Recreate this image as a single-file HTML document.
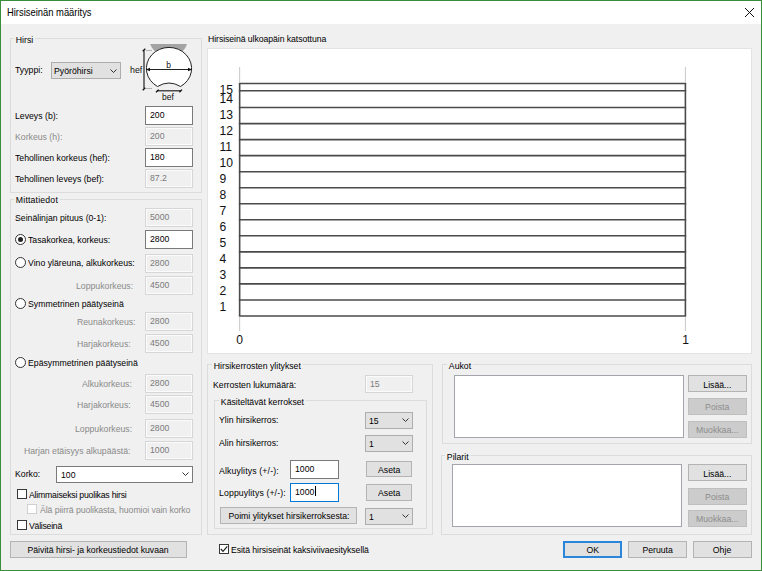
<!DOCTYPE html>
<html><head><meta charset="utf-8">
<style>
*{box-sizing:border-box}
html,body{margin:0;padding:0}
body{width:762px;height:571px;position:relative;overflow:hidden;background:#3a8d3b;font-family:"Liberation Sans",sans-serif;font-size:8.7px;color:#000;-webkit-text-stroke:0px}
.win{position:absolute;left:1px;top:1px;width:760px;height:569px;background:#f0f0f0}
.title{position:absolute;left:0;top:0;width:760px;height:23px;background:#fff}
.t{position:absolute;white-space:nowrap;line-height:10px}
.d{color:#8a8a8a}
.g{position:absolute;border:1px solid #dcdcdc}
.gl{position:absolute;white-space:nowrap;line-height:10px;background:#f0f0f0;padding:0 2px}
.tb{position:absolute;background:#fff;border:1px solid #7a7a7a;line-height:10px;padding:0 0 0 4px;white-space:nowrap}
.tbd{position:absolute;background:#f0f0f0;border:1px solid #d6d6d6;box-shadow:inset 0 0 0 1px #fbfbfb;color:#7a7a7a;line-height:10px;padding:0 0 0 4px;white-space:nowrap}
.cb{position:absolute;background:#e1e1e1;border:1px solid #adadad;line-height:10px;white-space:nowrap}
.btn{position:absolute;background:#e1e1e1;border:1px solid #b4b4b4;text-align:center;line-height:10px;white-space:nowrap}
.btnd{position:absolute;background:#cccccc;border:1px solid #bfbfbf;color:#8d8d8d;text-align:center;line-height:10px;white-space:nowrap}
.lb{position:absolute;background:#fff;border:1px solid #a2a5ab}
.t,.gl{font-size:9.5px;transform:scaleX(0.916);transform-origin:0 0}
.s{display:inline-block;line-height:10px;font-size:9.5px;transform:scaleX(0.916);transform-origin:0 0}
.btn .s,.btnd .s{transform-origin:50% 0}
.chev{position:absolute;width:7px;height:4px}
.rad{position:absolute;width:11px;height:11px;border:1px solid #333;border-radius:50%;background:#fff}
.chk{position:absolute;width:10px;height:10px;border:1px solid #383838;background:#fff}
</style></head><body>
<div class="win">
  <div class="title"></div>
</div>
<div class="t" style="left:7px;top:6px;font-size:10.8px;line-height:12px;transform:scaleX(0.87);transform-origin:0 0">Hirsiseinän määritys</div>
<svg style="position:absolute;left:744px;top:7px" width="11" height="11" viewBox="0 0 11 11"><path d="M1 1L10 10M10 1L1 10" stroke="#111" stroke-width="1"/></svg>

<!-- Hirsi group -->
<div class="g" style="left:10px;top:38px;width:192px;height:155px"></div>
<div class="gl" style="left:14px;top:35px">Hirsi</div>
<div class="t" style="left:15px;top:65px">Tyyppi:</div>
<div class="cb" style="left:51px;top:62px;width:70px;height:17px;padding:2.5px 0 0 2px"><span class="s">Pyöröhirsi</span></div>
<svg class="chev" style="left:110px;top:68.5px" viewBox="0 0 7 4"><path d="M0.5 0.5L3.5 3.5L6.5 0.5" fill="none" stroke="#333" stroke-width="1"/></svg>

<svg style="position:absolute;left:0;top:0;-webkit-text-stroke:0" width="210" height="110" font-family="Liberation Sans" fill="#111">
<path d="M150 44H187Q186 48 182 52A22.6 21 0 0 0 155.5 52Q151.5 48 150 44Z" fill="#a4a4a4"/>
<path d="M157.5 86.5A22.6 21 0 1 1 180.5 86.5Q169 79.5 157.5 86.5Z" fill="#fff" stroke="#222" stroke-width="1"/>
<line x1="147" y1="69.5" x2="191" y2="69.5" stroke="#222" stroke-width="1.2"/>
<path d="M146 69.5L150 67.7V71.3Z M192 69.5L188 67.7V71.3Z" fill="#111"/>
<line x1="144" y1="50.5" x2="144" y2="88.5" stroke="#222" stroke-width="1.2"/>
<path d="M142.7 51.3L145.3 48.7 M142.7 90.3L145.3 87.7" stroke="#111" stroke-width="1.3"/>
<line x1="146" y1="50.5" x2="152" y2="50.5" stroke="#b0b0b0" stroke-width="1"/>
<line x1="146" y1="88.5" x2="152" y2="88.5" stroke="#b0b0b0" stroke-width="1"/>
<line x1="157" y1="90.8" x2="181" y2="90.8" stroke="#222" stroke-width="1.2"/>
<path d="M156 92.2L158.6 89.6 M179.4 92.2L182 89.6" stroke="#111" stroke-width="1.3"/>
<text x="168.5" y="68" font-size="8.5" text-anchor="middle">b</text>
<text x="130" y="73" font-size="8.8">hef</text>
<text x="162" y="99.6" font-size="8.5">bef</text>
</svg>
<div class="t" style="left:15px;top:111px">Leveys (b):</div>
<div class="tb" style="left:145px;top:106px;width:48px;height:19px;padding-top:2.5px"><span class="s">200</span></div>
<div class="t d" style="left:15px;top:132px">Korkeus (h):</div>
<div class="tbd" style="left:145px;top:127px;width:48px;height:19px;padding-top:2.5px"><span class="s">200</span></div>
<div class="t" style="left:15px;top:153px">Tehollinen korkeus (hef):</div>
<div class="tb" style="left:145px;top:148px;width:48px;height:19px;padding-top:2.5px"><span class="s">180</span></div>
<div class="t" style="left:15px;top:174px">Tehollinen leveys (bef):</div>
<div class="tbd" style="left:145px;top:169px;width:48px;height:19px;padding-top:2.5px"><span class="s">87.2</span></div>

<!-- Mittatiedot group -->
<div class="g" style="left:10px;top:199px;width:192px;height:336px"></div>
<div class="gl" style="left:14px;top:195px;letter-spacing:0.2px">Mittatiedot</div>
<div class="t" style="left:15px;top:213px">Seinälinjan pituus (0-1):</div>
<div class="tbd" style="left:145px;top:208px;width:48px;height:19px;padding-top:2.5px"><span class="s">5000</span></div>
<div class="rad" style="left:15px;top:234px"></div>
<div style="position:absolute;left:18px;top:237px;width:5px;height:5px;border-radius:50%;background:#222"></div>
<div class="t" style="left:27.5px;top:235px">Tasakorkea, korkeus:</div>
<div class="tb" style="left:145px;top:230px;width:48px;height:19px;padding-top:2.5px"><span class="s">2800</span></div>
<div class="rad" style="left:15px;top:257px"></div>
<div class="t" style="left:28px;top:258px">Vino yläreuna, alkukorkeus:</div>
<div class="tbd" style="left:145px;top:254px;width:48px;height:19px;padding-top:2.5px"><span class="s">2800</span></div>
<div class="t d" style="left:76px;top:281px">Loppukorkeus:</div>
<div class="tbd" style="left:145px;top:276px;width:48px;height:19px;padding-top:2.5px"><span class="s">4500</span></div>
<div class="rad" style="left:15px;top:298px"></div>
<div class="t" style="left:28px;top:299px">Symmetrinen päätyseinä</div>
<div class="t d" style="left:77px;top:317px">Reunakorkeus:</div>
<div class="tbd" style="left:145px;top:312px;width:48px;height:19px;padding-top:2.5px"><span class="s">2800</span></div>
<div class="t d" style="left:77px;top:339px">Harjakorkeus:</div>
<div class="tbd" style="left:145px;top:334px;width:48px;height:19px;padding-top:2.5px"><span class="s">4500</span></div>
<div class="rad" style="left:15px;top:357px"></div>
<div class="t" style="left:28px;top:358px">Epäsymmetrinen päätyseinä</div>
<div class="t d" style="left:82px;top:379px">Alkukorkeus:</div>
<div class="tbd" style="left:145px;top:374px;width:48px;height:19px;padding-top:2.5px"><span class="s">2800</span></div>
<div class="t d" style="left:77px;top:400px">Harjakorkeus:</div>
<div class="tbd" style="left:145px;top:395px;width:48px;height:19px;padding-top:2.5px"><span class="s">4500</span></div>
<div class="t d" style="left:75px;top:424px">Loppukorkeus:</div>
<div class="tbd" style="left:145px;top:419px;width:48px;height:19px;padding-top:2.5px"><span class="s">2800</span></div>
<div class="t d" style="left:24px;top:446px">Harjan etäisyys alkupäästä:</div>
<div class="tbd" style="left:145px;top:441px;width:48px;height:19px;padding-top:2.5px"><span class="s">1000</span></div>
<div class="t" style="left:15px;top:469px">Korko:</div>
<div class="tb" style="left:56px;top:466px;width:137px;height:17px;padding-top:3px"><span class="s">100</span></div>
<svg class="chev" style="left:182px;top:472px" viewBox="0 0 7 4"><path d="M0.5 0.5L3.5 3.5L6.5 0.5" fill="none" stroke="#333" stroke-width="1"/></svg>
<div class="chk" style="left:17px;top:489px"></div>
<div class="t" style="left:29px;top:490px;letter-spacing:-0.24px">Alimmaiseksi puolikas hirsi</div>
<div class="chk" style="left:27px;top:504px;border-color:#d0d0d0"></div>
<div class="t d" style="left:40px;top:505px;letter-spacing:-0.08px">Älä piirrä puolikasta, huomioi vain korko</div>
<div class="chk" style="left:17px;top:520px"></div>
<div class="t" style="left:29px;top:521px;letter-spacing:-0.28px">Väliseinä</div>
<div class="btn" style="left:10px;top:541px;width:177px;height:17px;padding-top:3px"><span class="s">Päivitä hirsi- ja korkeustiedot kuvaan</span></div>

<!-- chart panel -->
<div class="t" style="left:208px;top:34px;letter-spacing:-0.08px">Hirsiseinä ulkoapäin katsottuna</div>
<div style="position:absolute;left:207px;top:48px;width:545px;height:306px;background:#fff;border:1px solid #e3e3e3"></div>
<svg style="position:absolute;left:0;top:0;-webkit-text-stroke:0" width="762" height="571" font-family="Liberation Sans" font-size="13.2" fill="#111">
<line x1="238.85" y1="315.96" x2="686.1999999999999" y2="315.96" stroke="#4a4a4a" stroke-width="1.6"/>
<line x1="238.85" y1="299.93" x2="686.1999999999999" y2="299.93" stroke="#4a4a4a" stroke-width="1.6"/>
<line x1="238.85" y1="283.90" x2="686.1999999999999" y2="283.90" stroke="#4a4a4a" stroke-width="1.6"/>
<line x1="238.85" y1="267.87" x2="686.1999999999999" y2="267.87" stroke="#4a4a4a" stroke-width="1.6"/>
<line x1="238.85" y1="251.84" x2="686.1999999999999" y2="251.84" stroke="#4a4a4a" stroke-width="1.6"/>
<line x1="238.85" y1="235.81" x2="686.1999999999999" y2="235.81" stroke="#4a4a4a" stroke-width="1.6"/>
<line x1="238.85" y1="219.78" x2="686.1999999999999" y2="219.78" stroke="#4a4a4a" stroke-width="1.6"/>
<line x1="238.85" y1="203.75" x2="686.1999999999999" y2="203.75" stroke="#4a4a4a" stroke-width="1.6"/>
<line x1="238.85" y1="187.72" x2="686.1999999999999" y2="187.72" stroke="#4a4a4a" stroke-width="1.6"/>
<line x1="238.85" y1="171.69" x2="686.1999999999999" y2="171.69" stroke="#4a4a4a" stroke-width="1.6"/>
<line x1="238.85" y1="155.66" x2="686.1999999999999" y2="155.66" stroke="#4a4a4a" stroke-width="1.6"/>
<line x1="238.85" y1="139.63" x2="686.1999999999999" y2="139.63" stroke="#4a4a4a" stroke-width="1.6"/>
<line x1="238.85" y1="123.60" x2="686.1999999999999" y2="123.60" stroke="#4a4a4a" stroke-width="1.6"/>
<line x1="238.85" y1="107.57" x2="686.1999999999999" y2="107.57" stroke="#4a4a4a" stroke-width="1.6"/>
<line x1="238.85" y1="90.70" x2="686.1999999999999" y2="90.70" stroke="#4a4a4a" stroke-width="1.6"/>
<line x1="238.85" y1="83.46" x2="686.1999999999999" y2="83.46" stroke="#4a4a4a" stroke-width="1.6"/>
<line x1="239.65" y1="83.46" x2="239.65" y2="315.96" stroke="#4a4a4a" stroke-width="1.6"/>
<line x1="685.4" y1="83.46" x2="685.4" y2="315.96" stroke="#4a4a4a" stroke-width="1.6"/>
<line x1="239.65" y1="67" x2="239.65" y2="82.6" stroke="#c8c8c8" stroke-width="1"/>
<line x1="239.65" y1="316.8" x2="239.65" y2="331" stroke="#c8c8c8" stroke-width="1"/>
<line x1="685.4" y1="67" x2="685.4" y2="82.6" stroke="#c8c8c8" stroke-width="1"/>
<line x1="685.4" y1="316.8" x2="685.4" y2="331" stroke="#c8c8c8" stroke-width="1"/>
<g transform="translate(219.5,0) scale(0.92,1)"><text x="0" y="311.1">1</text><text x="0" y="295.1">2</text><text x="0" y="279.0">3</text><text x="0" y="263.0">4</text><text x="0" y="247.0">5</text><text x="0" y="230.9">6</text><text x="0" y="214.9">7</text><text x="0" y="198.9">8</text><text x="0" y="182.9">9</text><text x="0" y="166.8">10</text><text x="0" y="150.8">11</text><text x="0" y="134.8">12</text><text x="0" y="118.7">13</text><text x="0" y="102.7">14</text><text x="0" y="94.4">15</text></g>
<g transform="translate(239.6,0) scale(0.92,1)"><text x="0" y="343.8" text-anchor="middle">0</text></g>
<g transform="translate(685.6,0) scale(0.92,1)"><text x="0" y="343.6" text-anchor="middle">1</text></g>
</svg>

<!-- Hirsikerrosten ylitykset -->
<div class="g" style="left:207px;top:364px;width:226px;height:171px"></div>
<div class="gl" style="left:212px;top:361px">Hirsikerrosten ylitykset</div>
<div class="t" style="left:213px;top:380px">Kerrosten lukumäärä:</div>
<div class="tbd" style="left:365px;top:375px;width:48px;height:18px;padding-top:3px"><span class="s">15</span></div>
<div class="g" style="left:214px;top:400px;width:213px;height:129px"></div>
<div class="gl" style="left:219px;top:396.5px">Käsiteltävät kerrokset</div>
<div class="t" style="left:219px;top:415px">Ylin hirsikerros:</div>
<div class="cb" style="left:365px;top:412px;width:48px;height:17px;padding:3px 0 0 3px"><span class="s">15</span></div>
<div class="t" style="left:219px;top:438px">Alin hirsikerros:</div>
<div class="cb" style="left:365px;top:435px;width:48px;height:17px;padding:3px 0 0 3px"><span class="s">1</span></div>
<div class="t" style="left:219px;top:466px;letter-spacing:0.16px">Alkuylitys (+/-):</div>
<div class="tb" style="left:290px;top:460px;width:49px;height:19px;padding-top:2.5px"><span class="s">1000</span></div>
<div class="btn" style="left:366px;top:461px;width:46px;height:16px;padding-top:3px"><span class="s">Aseta</span></div>
<div class="t" style="left:219px;top:488px;letter-spacing:0.13px">Loppuylitys (+/-):</div>
<div class="tb" style="left:290px;top:483px;width:49px;height:19px;padding-top:2.5px;border-color:#0078d7"><span class="s">1000</span></div>
<div class="btn" style="left:366px;top:484px;width:46px;height:17px;padding-top:3px"><span class="s">Aseta</span></div>
<div class="btn" style="left:220px;top:507px;width:137px;height:17px;padding-top:3px"><span class="s">Poimi ylitykset hirsikerroksesta:</span></div>
<div class="cb" style="left:365px;top:508px;width:48px;height:17px;padding:3px 0 0 3px"><span class="s">1</span></div>
<div class="chk" style="left:219px;top:544px"></div>
<div class="t" style="left:231px;top:545px;letter-spacing:-0.08px">Esitä hirsiseinät kaksiviivaesityksellä</div>

<!-- Aukot -->
<div class="g" style="left:442px;top:364px;width:310px;height:80px"></div>
<div class="gl" style="left:447px;top:361px">Aukot</div>
<div class="lb" style="left:454px;top:375px;width:230px;height:63px"></div>
<div class="btn" style="left:688px;top:375px;width:59px;height:17px;padding-top:4px"><span class="s">Lisää...</span></div>
<div class="btnd" style="left:688px;top:398px;width:59px;height:17px;padding-top:3px"><span class="s">Poista</span></div>
<div class="btnd" style="left:688px;top:421px;width:59px;height:17px;padding-top:3px"><span class="s">Muokkaa...</span></div>
<!-- Pilarit -->
<div class="g" style="left:441px;top:455px;width:311px;height:80px"></div>
<div class="gl" style="left:445px;top:452px">Pilarit</div>
<div class="lb" style="left:452px;top:464px;width:230px;height:63px"></div>
<div class="btn" style="left:688px;top:464px;width:59px;height:17px;padding-top:4px"><span class="s">Lisää...</span></div>
<div class="btnd" style="left:688px;top:488px;width:59px;height:17px;padding-top:3px"><span class="s">Poista</span></div>
<div class="btnd" style="left:688px;top:510px;width:59px;height:17px;padding-top:3px"><span class="s">Muokkaa...</span></div>

<div class="btn" style="left:563px;top:541px;width:59px;height:17px;padding-top:3px;border:2px solid #2a86db;padding-top:2px"><span class="s">OK</span></div>
<div class="btn" style="left:628px;top:541px;width:59px;height:17px;padding-top:3px"><span class="s">Peruuta</span></div>
<div class="btn" style="left:693px;top:541px;width:59px;height:17px;padding-top:3px"><span class="s">Ohje</span></div>
<svg class="chev" style="left:402px;top:418px" viewBox="0 0 7 4"><path d="M0.5 0.5L3.5 3.5L6.5 0.5" fill="none" stroke="#333" stroke-width="1"/></svg>
<svg class="chev" style="left:402px;top:441px" viewBox="0 0 7 4"><path d="M0.5 0.5L3.5 3.5L6.5 0.5" fill="none" stroke="#333" stroke-width="1"/></svg>
<svg class="chev" style="left:402px;top:514px" viewBox="0 0 7 4"><path d="M0.5 0.5L3.5 3.5L6.5 0.5" fill="none" stroke="#333" stroke-width="1"/></svg>
<svg style="position:absolute;left:219px;top:544px" width="10" height="10" viewBox="0 0 10 10"><path d="M1.8 5L4 7.3L8.3 2.3" fill="none" stroke="#222" stroke-width="1.2"/></svg>
<div style="position:absolute;left:315px;top:486px;width:1px;height:10px;background:#000"></div>
</body></html>
